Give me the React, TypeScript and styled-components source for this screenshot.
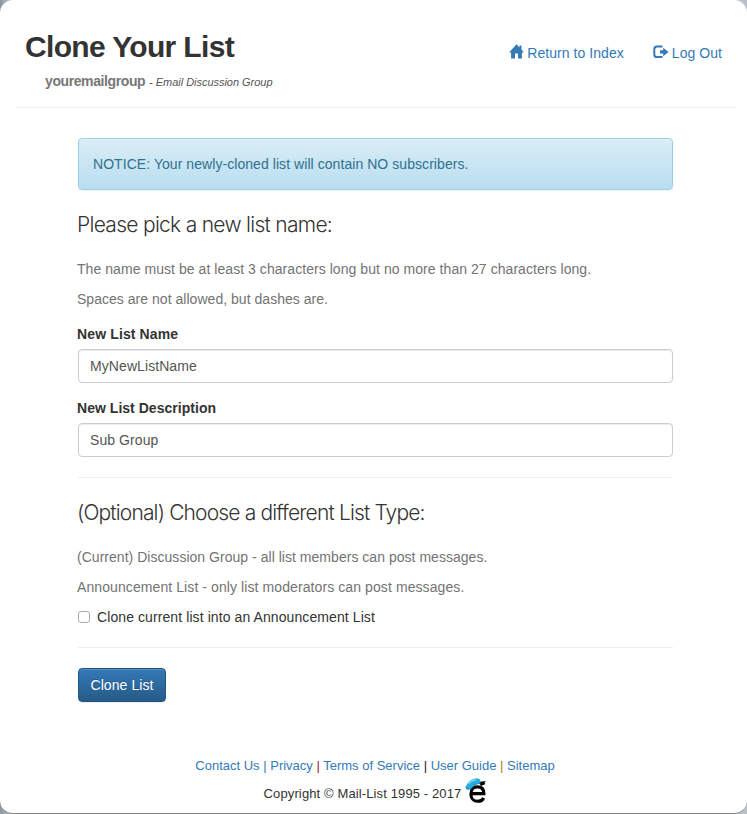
import React from "react";
import styled, { createGlobalStyle } from "styled-components";

const GlobalStyle = createGlobalStyle`
  *, *::before, *::after { box-sizing: border-box; }
  html { background: linear-gradient(90deg, #8d959c, #c3c9cf 12px, #c3c9cf calc(100% - 12px), #b8bfc5); }
  body { margin: 0; font: 14px/20px "Liberation Sans", Arial, sans-serif; color: #333; }
  h1, h2, p { margin: 0; }
  a { color: #337ab7; text-decoration: none; }
`;

const Page = styled.div`
  height: 814px;
  padding: 0 12px 0 15px;
  display: flex;
  flex-direction: column;
  background: #fff;
  border-bottom: 1px solid #858585;
  border-radius: 13px;
  overflow: hidden;
`;

const Header = styled.header`
  height: 108px;
  padding: 30px 13px 0 10px;
  display: flex;
  justify-content: space-between;
  border-bottom: 1px solid #eee;
`;

const Title = styled.h1`
  font-size: 30px;
  line-height: 33px;
  font-weight: 700;
  letter-spacing: -0.66px;
  white-space: nowrap;
`;

const Subtitle = styled.p`
  margin: 8px 0 0 20px;
  color: #777;
  white-space: nowrap;
`;

const GroupName = styled.strong`
  letter-spacing: -0.4px;
`;

const GroupType = styled.em`
  font-size: 11px;
  color: #555;
  letter-spacing: -0.03px;
`;

const Nav = styled.nav`
  display: flex;
  gap: 29px;
  padding-top: 13px;
`;

const NavLink = styled.a`
  height: 20px;
  display: flex;
  gap: 3px;
  letter-spacing: 0.05px;
  white-space: nowrap;
  svg { margin-top: 1px; }
`;

const Main = styled.main`
  width: 595px;
  margin: 30px 0 0 63px;
`;

const Notice = styled.div`
  height: 52px;
  padding: 15px 14px;
  color: #31708f;
  letter-spacing: 0.06px;
  background: linear-gradient(#d9edf7, #b9def0);
  border: 1px solid #9acfea;
  border-radius: 4px;
  box-shadow: inset 0 1px 0 rgba(255, 255, 255, 0.25), 0 1px 2px rgba(0, 0, 0, 0.05);
`;

const Heading = styled.h2<{ $spacing: number }>`
  margin: 23px 0 22px -1px;
  font: 300 21px/24px Inter, "Liberation Sans", sans-serif;
  letter-spacing: ${(p) => p.$spacing}px;
`;

const Help = styled.p<{ $spacing?: number }>`
  margin: 0 0 10px -1px;
  color: #737373;
  letter-spacing: ${(p) => p.$spacing ?? 0}px;
`;

const Field = styled.div`
  margin: 15px 0;
`;

const Label = styled.label<{ $spacing: number }>`
  display: block;
  margin: 0 0 5px -1px;
  font-weight: 700;
  letter-spacing: ${(p) => p.$spacing}px;
`;

const Input = styled.input`
  display: block;
  width: 100%;
  height: 34px;
  padding: 6px 11px;
  font: inherit;
  letter-spacing: 0.08px;
  color: #555;
  background: #fff;
  border: 1px solid #ccc;
  border-radius: 4px;
  box-shadow: inset 0 1px 1px rgba(0, 0, 0, 0.075);
  outline: none;
`;

const Rule = styled.hr`
  height: 1px;
  margin: 20px 0;
  border: 0;
  background: #eee;
`;

const CheckLabel = styled.label`
  display: flex;
  align-items: center;
  gap: 7px;
  letter-spacing: 0.09px;
`;

const Checkbox = styled.input`
  appearance: none;
  width: 12px;
  height: 12px;
  margin: 0;
  border: 1px solid #a9a9a9;
  border-radius: 3px;
  background: #fff;
`;

const Button = styled.button`
  display: block;
  width: 88px;
  height: 34px;
  padding: 0;
  font: inherit;
  letter-spacing: 0.08px;
  color: #fff;
  text-shadow: 0 -1px 0 rgba(0, 0, 0, 0.2);
  background: linear-gradient(#337ab7, #265a88);
  border: 1px solid #245580;
  border-radius: 4px;
  box-shadow: inset 0 1px 0 rgba(255, 255, 255, 0.15), 0 1px 1px rgba(0, 0, 0, 0.075);
`;

const Footer = styled.footer`
  margin: 54px 0 0;
  font-size: 13px;
  text-align: center;
`;

const FooterLinks = styled.div`
  letter-spacing: 0;
`;

const Separator = styled.span<{ $color: string }>`
  color: ${(p) => p.$color};
`;

const Copyright = styled.div`
  height: 30px;
  padding-left: 1px;
  display: flex;
  justify-content: center;
  align-items: flex-start;
  gap: 3px;
  letter-spacing: 0.12px;
  span { padding-top: 8px; }
  svg { margin-top: 1px; }
`;

const HomeIcon = () => (
  <svg width="15" height="16" viewBox="0 0 15 16" fill="#337ab7">
    <path d="M7.5 0.3 10.5 3.5V1.4h2V5.6l2.4 2.9h-2V14.5H9V9.6H6v4.9H2.1V8.5h-2Z" />
  </svg>
);

const LogoutIcon = () => (
  <svg width="16" height="16" viewBox="0 0 16 16" fill="#337ab7">
    <path d="M9.5 2.5H4Q1.3 2.5 1.3 5.2v5.2q0 2.7 2.7 2.7h5.5" fill="none" stroke="#337ab7" strokeWidth="2" />
    <path d="M7 6.2h3.2V3.8L15.5 7.9l-5.3 4.3V9.5H7Z" />
  </svg>
);

const Logo = () => (
  <svg width="23" height="27" viewBox="0 0 23 27">
    <path d="M7.2 16.6h12.7c-.1-4.2-2.4-6.7-6.3-6.7-4.1 0-6.7 2.9-6.7 7 0 4.4 2.8 7.4 6.8 7.4 2.9 0 5-1.1 6-3.3" fill="none" stroke="#000" strokeWidth="3.1" />
    <path d="M14.5 5 22 4 20.3 5.8 21.6 7 17 9.1Z" fill="#000" />
    <path d="M1.1 10.4Q3 5.6 7.2 3 11.6.6 14.6 1.7q2.7 1.4 1.8 4.6-2.8-.1-6.4 2.2L6.7 12.1Q2.6 12.9 1.1 10.4Z" fill="#25abe2" />
    <path d="M4.3 7.1Q7.4 3.5 12.2 2.8" fill="none" stroke="#72d2f7" strokeWidth="1.6" />
    <path d="M2.1 11.7q2.2 1 4.6.3L10 8.5q3.6-2.2 6.4-2.1" fill="none" stroke="#08668d" strokeWidth=".7" />
  </svg>
);

const footerLinks = [
  { text: "Contact Us", separator: "#337ab7" },
  { text: "Privacy", separator: "#922" },
  { text: "Terms of Service", separator: "#222" },
  { text: "User Guide", separator: "#b87912" },
  { text: "Sitemap" },
];

export default function App() {
  return (
    <>
      <GlobalStyle />
      <Page>
        <Header>
          <div>
            <Title>Clone Your List</Title>
            <Subtitle>
              <GroupName>youremailgroup</GroupName> <GroupType>- Email Discussion Group</GroupType>
            </Subtitle>
          </div>
          <Nav>
            <NavLink href="#"><HomeIcon />Return to Index</NavLink>
            <NavLink href="#"><LogoutIcon />Log Out</NavLink>
          </Nav>
        </Header>
        <Main>
          <Notice>NOTICE: Your newly-cloned list will contain NO subscribers.</Notice>
          <Heading $spacing={-0.71}>Please pick a new list name:</Heading>
          <Help $spacing={0.055}>The name must be at least 3 characters long but no more than 27 characters long.</Help>
          <Help $spacing={0.03}>Spaces are not allowed, but dashes are.</Help>
          <Field>
            <Label $spacing={0.13} htmlFor="name">New List Name</Label>
            <Input id="name" defaultValue="MyNewListName" />
          </Field>
          <Field>
            <Label $spacing={0.03} htmlFor="description">New List Description</Label>
            <Input id="description" defaultValue="Sub Group" />
          </Field>
          <Rule />
          <Heading $spacing={-0.85}>(Optional) Choose a different List Type:</Heading>
          <Help $spacing={0.03}>(Current) Discussion Group - all list members can post messages.</Help>
          <Help $spacing={0.09}>Announcement List - only list moderators can post messages.</Help>
          <CheckLabel><Checkbox type="checkbox" />Clone current list into an Announcement List</CheckLabel>
          <Rule />
          <Button>Clone List</Button>
        </Main>
        <Footer>
          <FooterLinks>
            {footerLinks.map(({ text, separator }) => (
              <React.Fragment key={text}>
                <a href="#">{text}</a>
                {separator && <Separator $color={separator}> | </Separator>}
              </React.Fragment>
            ))}
          </FooterLinks>
          <Copyright><span>Copyright © Mail-List 1995 - 2017</span><Logo /></Copyright>
        </Footer>
      </Page>
    </>
  );
}
